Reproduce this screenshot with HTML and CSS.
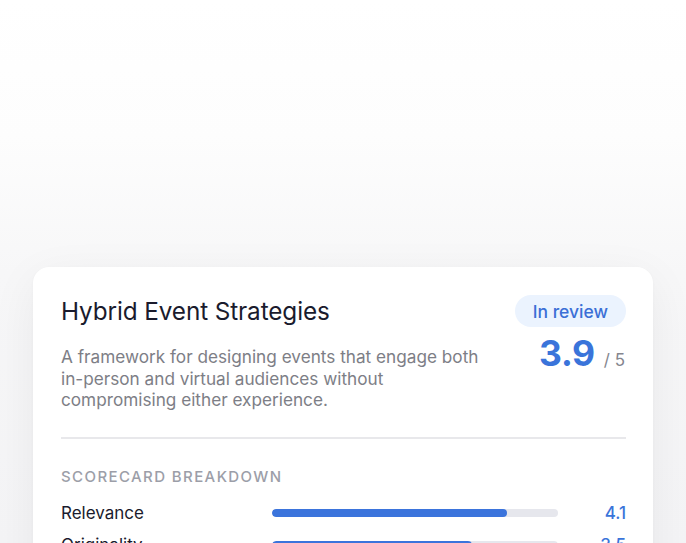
FILE: index.html
```html
<!DOCTYPE html>
<html lang="en">
<head>
<meta charset="utf-8">
<title>Hybrid Event Strategies</title>
<link rel="stylesheet" href="styles.css">
</head>
<body>
<main class="page">
  <article class="card">
    <header class="card-head">
      <div class="head-main">
        <h1 class="title">Hybrid Event Strategies</h1>
        <p class="desc">A framework for designing events that engage both in-person and virtual audiences without compromising either experience.</p>
      </div>
      <div class="head-side">
        <span class="badge">In review</span>
        <div class="score"><span class="score-num">3.9</span><span class="score-max">/ 5</span></div>
      </div>
    </header>
    <hr class="divider">
    <section class="breakdown">
      <h2 class="section-label">Scorecard breakdown</h2>
      <div class="rows">
        <div class="row">
          <span class="row-label">Relevance</span>
          <span class="track"><span class="fill" style="width:82%"></span></span>
          <span class="row-value">4.1</span>
        </div>
        <div class="row">
          <span class="row-label">Originality</span>
          <span class="track"><span class="fill" style="width:70%"></span></span>
          <span class="row-value">3.5</span>
        </div>
        <div class="row">
          <span class="row-label">Feasibility</span>
          <span class="track"><span class="fill" style="width:80%"></span></span>
          <span class="row-value">4.0</span>
        </div>
      </div>
    </section>
  </article>
</main>
</body>
</html>
```

FILE: styles.css
```css
* { box-sizing: border-box; }
html, body { margin: 0; height: 100%; }
body {
  font-family: Inter, "Noto Sans", "Liberation Sans", sans-serif;
  background: linear-gradient(180deg, #ffffff 0%, #fdfdfd 25%, #f7f7f8 50%, #f4f4f6 100%);
  overflow: hidden;
}
.page {
  padding-top: 267px;
  display: flex;
  justify-content: center;
}
.card {
  width: 620px;
  background: #ffffff;
  border-radius: 16px;
  padding: 28px 27px 28px 28px;
  box-shadow: 0 12px 48px rgba(20, 20, 40, 0.06), 0 1px 3px rgba(20, 20, 40, 0.03);
}
.card-head {
  display: flex;
  justify-content: space-between;
  align-items: flex-start;
  gap: 12px;
}
.head-main { flex: 0 1 432px; min-width: 0; }
.title {
  margin: 0;
  font-size: 24.3px;
  line-height: 32px;
  font-weight: 400;
  color: #1a1b2d;
  letter-spacing: -0.1px;
  white-space: nowrap;
}
.desc {
  margin: 19px 0 0;
  font-size: 17.2px;
  line-height: 21.5px;
  color: #7d7e86;
}
.head-side {
  flex-shrink: 0;
  display: flex;
  flex-direction: column;
  align-items: flex-end;
}
.badge {
  display: inline-flex;
  align-items: center;
  height: 32px;
  padding: 0 18px;
  border-radius: 16px;
  background: #ebf3fe;
  color: #3b6fd6;
  font-size: 17.5px;
  font-weight: 500;
  white-space: nowrap;
}
.score {
  margin-top: 7px;
  display: flex;
  align-items: baseline;
  gap: 9px;
  padding-right: 1px;
  white-space: nowrap;
}
.score-num {
  font-size: 35.5px;
  line-height: 40px;
  font-weight: 700;
  color: #3a74da;
  letter-spacing: -0.3px;
}
.score-max {
  font-size: 17px;
  color: #85868e;
}
.divider {
  border: 0;
  height: 2px;
  background: #e8e8eb;
  margin: 26px 0 0;
}
.section-label {
  margin: 27px 0 0;
  font-size: 15px;
  line-height: 22px;
  font-weight: 500;
  letter-spacing: 1.4px;
  text-transform: uppercase;
  color: #9c9ea8;
}
.rows {
  margin-top: 9px;
  display: flex;
  flex-direction: column;
}
.row {
  display: grid;
  grid-template-columns: 211px 1fr 68px;
  align-items: center;
  height: 32px;
}
.row-label {
  font-size: 17px;
  color: #1a1b2d;
}
.track {
  display: block;
  height: 8px;
  border-radius: 4px;
  background: #e6e7ed;
  overflow: hidden;
}
.fill {
  display: block;
  height: 100%;
  border-radius: 4px;
  background: #3b74dc;
}
.row-value {
  text-align: right;
  font-size: 17px;
  font-weight: 500;
  color: #3a74da;
}
```
